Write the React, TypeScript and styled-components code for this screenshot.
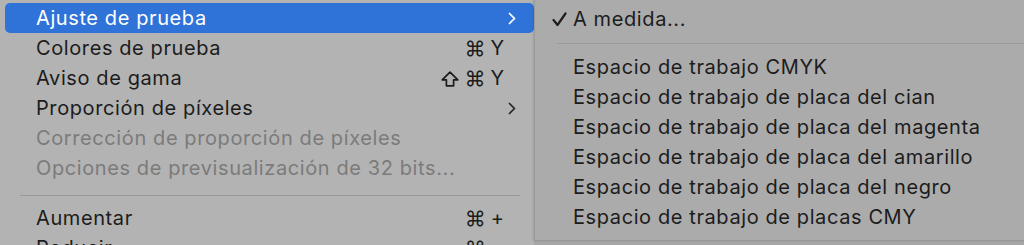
import React from 'react'
import styled, { createGlobalStyle } from 'styled-components'

const GlobalStyle = createGlobalStyle`
  html, body {
    margin: 0;
    padding: 0;
    background: #a9a9a9;
    overflow: hidden;
  }
  body {
    font-family: Inter, "Noto Sans", "Liberation Sans", sans-serif;
    -webkit-font-smoothing: antialiased;
  }
`

interface IItem {
  label: string
  shortcut?: string[]
  submenu?: boolean
  disabled?: boolean
  active?: boolean
  separator?: boolean
}

const mainItems: IItem[] = [
  { label: 'Ajuste de prueba', submenu: true, active: true },
  { label: 'Colores de prueba', shortcut: ['⌘', 'Y'] },
  { label: 'Aviso de gama', shortcut: ['⇧', '⌘', 'Y'] },
  { label: 'Proporción de píxeles', submenu: true },
  { label: 'Corrección de proporción de píxeles', disabled: true },
  { label: 'Opciones de previsualización de 32 bits...', disabled: true },
  { label: '', separator: true },
  { label: 'Aumentar', shortcut: ['⌘', '+'] },
  { label: 'Reducir', shortcut: ['⌘', '−'] },
]

const subItems: IItem[] = [
  { label: 'A medida...', active: true },
  { label: '', separator: true },
  { label: 'Espacio de trabajo CMYK' },
  { label: 'Espacio de trabajo de placa del cian' },
  { label: 'Espacio de trabajo de placa del magenta' },
  { label: 'Espacio de trabajo de placa del amarillo' },
  { label: 'Espacio de trabajo de placa del negro' },
  { label: 'Espacio de trabajo de placas CMY' },
]

function Chevron({ light }: { light?: boolean }) {
  return (
    <svg width="8" height="13" viewBox="0 0 8 13">
      <polyline
        points="1.5,1.5 6.5,6.5 1.5,11.5"
        fill="none"
        stroke={light ? '#ffffff' : '#262626'}
        strokeWidth="1.7"
        strokeLinecap="round"
        strokeLinejoin="round"
      />
    </svg>
  )
}

function ShiftIcon() {
  return (
    <svg width="18" height="16" viewBox="0 0 18 16">
      <polygon
        points="9,1.2 16.8,8.8 12.6,8.8 12.6,14.8 5.4,14.8 5.4,8.8 1.2,8.8"
        fill="none"
        stroke="#1c1c1c"
        strokeWidth="1.7"
        strokeLinejoin="round"
      />
    </svg>
  )
}

function Check() {
  return (
    <svg width="15" height="15" viewBox="0 0 15 15">
      <polyline
        points="1.5,8 5.5,13 13.5,1.5"
        fill="none"
        stroke="#1e1e1e"
        strokeWidth="2.2"
        strokeLinecap="round"
        strokeLinejoin="round"
      />
    </svg>
  )
}

function App() {
  return (
    <>
      <GlobalStyle />
      <Screen>
        <MainMenu>
          {mainItems.map((item, index) =>
            item.separator ? (
              <MainSeparator key={index} />
            ) : (
              <MainRow key={index} active={item.active} disabled={item.disabled}>
                <Label>{item.label}</Label>
                {item.shortcut && (
                  <Shortcut>
                    {item.shortcut.map((key, i) =>
                      key === '⇧' ? (
                        <IconKey key={i}>
                          <ShiftIcon />
                        </IconKey>
                      ) : (
                        <Key key={i} symbol={key === '⌘'}>
                          {key}
                        </Key>
                      )
                    )}
                  </Shortcut>
                )}
                {item.submenu && (
                  <Arrow>
                    <Chevron light={item.active} />
                  </Arrow>
                )}
              </MainRow>
            )
          )}
        </MainMenu>
        <SubMenu>
          {subItems.map((item, index) =>
            item.separator ? (
              <SubSeparator key={index} />
            ) : (
              <SubRow key={index}>
                <CheckSlot>{item.active && <Check />}</CheckSlot>
                <Label>{item.label}</Label>
              </SubRow>
            )
          )}
        </SubMenu>
      </Screen>
    </>
  )
}

export default App

const Screen = styled.div`
  display: flex;
  flex-direction: row;
  align-items: flex-start;
  height: 245px;
  width: 1024px;
  overflow: hidden;
  background: #a7a7a7;
`

const MainMenu = styled.div`
  display: flex;
  flex-direction: column;
  width: 534px;
  height: 245px;
  padding: 3px 0 0 5px;
  box-sizing: border-box;
  background: #b3b3b3;
  flex-shrink: 0;
`

const MainRow = styled.div<{ active?: boolean; disabled?: boolean }>`
  display: flex;
  align-items: center;
  height: 30px;
  flex-shrink: 0;
  padding: 0 18px 0 31px;
  border-radius: 5px;
  background: ${({ active }) => (active ? '#2f73d9' : 'transparent')};
  color: ${({ active, disabled }) => {
    if (active) return '#ffffff'
    if (disabled) return '#7b7b7b'
    return '#1c1c1c'
  }};
  font-size: 20px;
  letter-spacing: 0.6px;
`

const Label = styled.span`
  flex: 1;
  white-space: nowrap;
`

const Shortcut = styled.span`
  display: flex;
  align-items: center;
  gap: 5px;
  margin-right: 12px;
  letter-spacing: 0;
`

const Key = styled.span<{ symbol?: boolean }>`
  display: inline-block;
  font-size: ${({ symbol }) => (symbol ? '21px' : '20px')};
`

const IconKey = styled.span`
  display: flex;
  align-items: center;
  margin-top: 1px;
`

const Arrow = styled.span`
  display: flex;
  align-items: center;
  margin-top: 1px;
`

const MainSeparator = styled.div`
  height: 1px;
  margin: 12px 14px 7px 15px;
  background: #999999;
  flex-shrink: 0;
`

const SubMenu = styled.div`
  display: flex;
  flex-direction: column;
  flex: 1;
  height: 241px;
  padding-top: 4px;
  box-sizing: border-box;
  background: #ababab;
  border-left: 1px solid #9a9a9a;
  border-bottom: 1px solid #979797;
  box-shadow: -1px 0 2px rgba(0, 0, 0, 0.12);
`

const SubRow = styled.div`
  display: flex;
  align-items: center;
  height: 30px;
  flex-shrink: 0;
  color: #1c1c1c;
  font-size: 20px;
  letter-spacing: 0.6px;
`

const CheckSlot = styled.span`
  display: flex;
  align-items: center;
  justify-content: flex-start;
  width: 21px;
  margin-left: 17px;
`

const SubSeparator = styled.div`
  height: 1px;
  margin: 9px 0 8px 22px;
  background: #999999;
  flex-shrink: 0;
`
